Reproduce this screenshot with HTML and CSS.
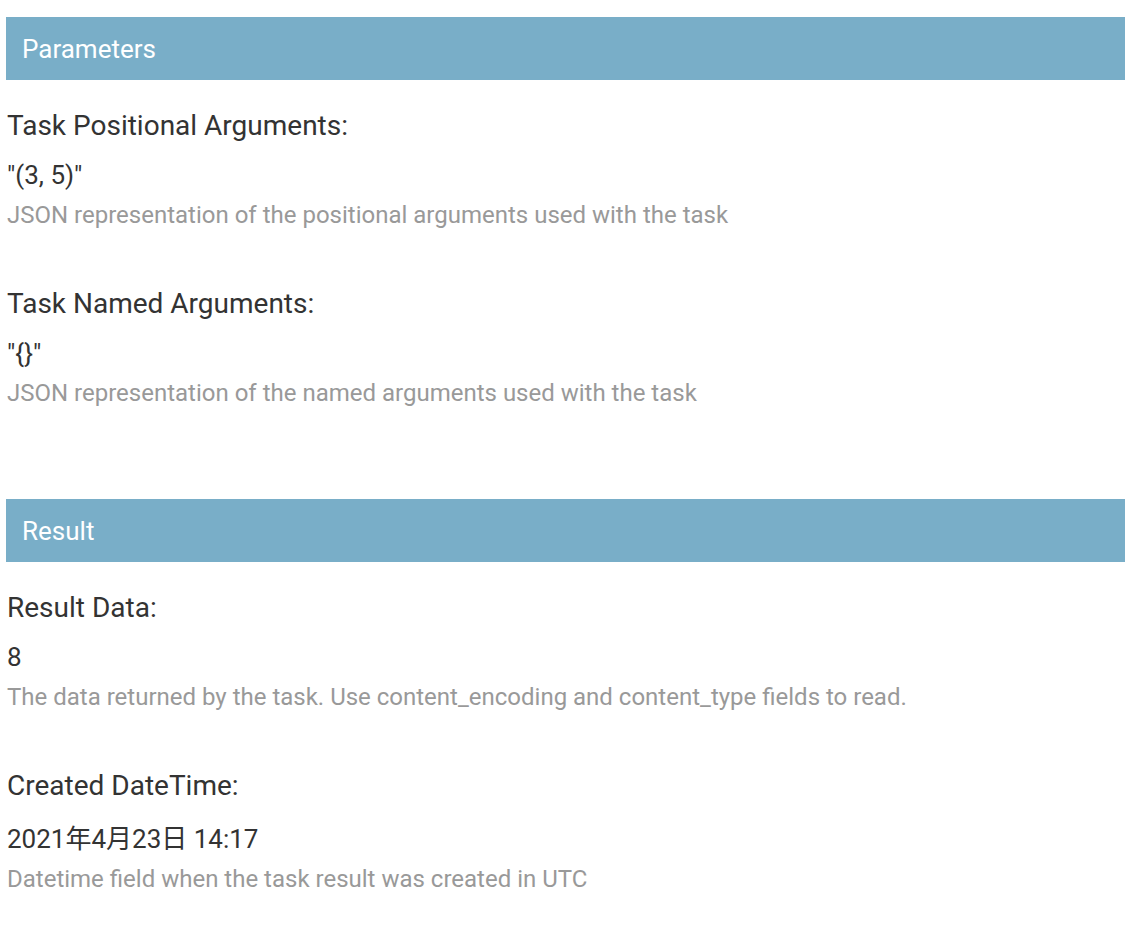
FILE: index.html
```html
<!DOCTYPE html>
<html>
<head>
<meta charset="utf-8">
<link rel="stylesheet" href="styles.css">
</head>
<body>
<div class="page">
  <section class="fieldset">
    <h2 class="fs-title">Parameters</h2>
    <div class="field">
      <div class="label">Task Positional Arguments:</div>
      <div class="value">"(3, 5)"</div>
      <div class="help">JSON representation of the positional arguments used with the task</div>
    </div>
    <div class="field">
      <div class="label">Task Named Arguments:</div>
      <div class="value">"{}"</div>
      <div class="help">JSON representation of the named arguments used with the task</div>
    </div>
  </section>
  <section class="fieldset">
    <h2 class="fs-title">Result</h2>
    <div class="field">
      <div class="label">Result Data:</div>
      <div class="value">8</div>
      <div class="help">The data returned by the task. Use content_encoding and content_type fields to read.</div>
    </div>
    <div class="field">
      <div class="label">Created DateTime:</div>
      <div class="value value-date">2021年4月23日 14:17</div>
      <div class="help">Datetime field when the task result was created in UTC</div>
    </div>
  </section>
</div>
</body>
</html>
```

FILE: styles.css
```css
html, body {
  margin: 0;
  padding: 0;
  background: #fff;
}
body {
  font-family: Roboto, "Noto Sans CJK JP", "Noto Sans", sans-serif;
  color: #333;
}
.page {
  padding: 17px 0 0 6px;
}
.fieldset {
  margin: 0 0 91px 0;
}
.fieldset:last-child {
  margin-bottom: 0;
}
.fs-title {
  margin: 0;
  height: 63px;
  line-height: 63px;
  padding: 1px 0 0 16px;
  box-sizing: border-box;
  background: #79aec8;
  color: #fff;
  font-size: 26px;
  font-weight: 400;
}
.field {
  padding-left: 1px;
  margin-top: 29px;
}
.field + .field {
  margin-top: 57px;
}
.label {
  font-size: 28px;
  line-height: 34px;
  color: #333;
}
.value {
  font-size: 26px;
  line-height: 34px;
  margin-top: 15px;
  color: #333;
}
.value-date {
  margin-top: 19px;
}
.help {
  font-size: 24px;
  line-height: 30px;
  margin-top: 8px;
  color: #999;
}
```
